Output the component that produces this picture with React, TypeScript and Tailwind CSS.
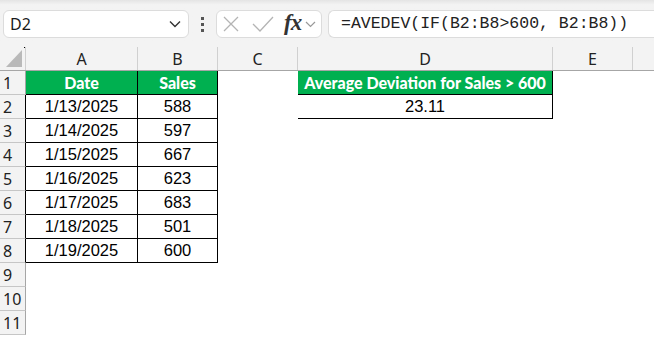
import React from 'react';

type Cell = { text?: string; kind?: 'head' | 'data' | 'none' };

const COLS = [
  { key: 'A', w: 'w-[112px]' },
  { key: 'B', w: 'w-[80px]' },
  { key: 'C', w: 'w-[80px]' },
  { key: 'D', w: 'w-[255px]' },
  { key: 'E', w: 'w-[80px]' },
];

const dates = ['1/13/2025', '1/14/2025', '1/15/2025', '1/16/2025', '1/17/2025', '1/18/2025', '1/19/2025'];
const sales = ['588', '597', '667', '623', '683', '501', '600'];

const rows: Cell[][] = Array.from({ length: 11 }, (_, i) => {
  const r = i + 1;
  const none: Cell = { kind: 'none' };
  if (r === 1)
    return [
      { text: 'Date', kind: 'head' },
      { text: 'Sales', kind: 'head' },
      none,
      { text: 'Average Deviation for Sales > 600', kind: 'head' },
      none,
    ];
  if (r <= 8)
    return [
      { text: dates[r - 2], kind: 'data' },
      { text: sales[r - 2], kind: 'data' },
      none,
      r === 2 ? { text: '23.11', kind: 'data' } : none,
      none,
    ];
  return [none, none, none, none, none];
});

const App: React.FC = () => {
  return (
    <div className="w-[654px] h-[337px] overflow-hidden bg-white font-['Liberation_Sans',sans-serif]">
      {/* formula bar */}
      <div className="h-[47px] bg-[#f3f3f3] bg-gradient-to-b from-[#e4e4e4] via-[#f3f3f3] via-[10%] to-[#f3f3f3] flex items-start pt-[10px] pl-[3px]">
        <div className="w-[186px] h-[28px] bg-white border border-[#dcdcdc] rounded-[6px] flex items-center justify-between pl-[6px] pr-[7px]">
          <span className="text-[16px] text-[#1a1a1a] font-['Noto_Sans',sans-serif]">D2</span>
          <svg width="12" height="8" viewBox="0 0 12 8" fill="none" stroke="#333" strokeWidth="1.4">
            <path d="M1 1.5 L6 6.5 L11 1.5" />
          </svg>
        </div>
        <div className="w-[27px] h-[28px] flex flex-col items-center justify-center gap-[3px]">
          <span className="w-[3px] h-[3px] bg-[#555]" />
          <span className="w-[3px] h-[3px] bg-[#555]" />
          <span className="w-[3px] h-[3px] bg-[#555]" />
        </div>
        <div className="w-[106px] h-[28px] bg-white border border-[#dcdcdc] rounded-[6px] flex items-center pl-[6px]">
          <svg width="16" height="16" viewBox="0 0 16 16" stroke="#b4b4b4" strokeWidth="1.3" fill="none">
            <path d="M1 1 L15 15 M15 1 L1 15" />
          </svg>
          <svg className="ml-[13px]" width="22" height="16" viewBox="0 0 22 16" stroke="#b4b4b4" strokeWidth="1.3" fill="none">
            <path d="M1 8 L8 15 L21 1" />
          </svg>
          <span className="ml-[10px] text-[23px] italic font-bold leading-none text-[#333] font-['Liberation_Serif',serif] tracking-[-1px] -mt-[3px]">
            fx
          </span>
          <svg className="ml-[4px]" width="11" height="7" viewBox="0 0 11 7" fill="none" stroke="#999" strokeWidth="1.2">
            <path d="M1 1 L5.5 5.5 L10 1" />
          </svg>
        </div>
        <div className="ml-[6px] flex-1 h-[28px] bg-white border border-[#dcdcdc] rounded-l-[6px] border-r-0 flex items-center pl-[12px]">
          <span className="text-[16.5px] text-[#222] font-['Liberation_Mono',monospace] whitespace-nowrap">
            =AVEDEV(IF(B2:B8&gt;600, B2:B8))
          </span>
        </div>
      </div>

      {/* column headers */}
      <div className="flex h-[24px] bg-[#f3f3f3] border-b border-[#a6a6a6]">
        <div className="w-[26px] h-full relative border-r border-[#d0d0d0]">
          <div className="absolute right-0 top-0 w-px h-px bg-black" />
          <svg className="absolute left-[6px] top-[3px]" width="16" height="17" viewBox="0 0 16 17">
            <path d="M16 0 L16 17 L0 17 Z" fill="#b9b9b9" />
          </svg>
        </div>
        {COLS.map((c) => (
          <div
            key={c.key}
            className={`${c.w} h-full border-r border-[#d0d0d0] flex items-center justify-center text-[16px] text-[#222] font-['Noto_Sans',sans-serif]`}
          >
            {c.key}
          </div>
        ))}
      </div>

      {/* grid */}
      {rows.map((cells, i) => {
        const r = i + 1;
        const inTable = r <= 8;
        return (
          <div key={r} className="flex h-[24px]">
            <div
              className={`w-[26px] h-full bg-[#f3f3f3] border-b border-[#c6c6c6] border-r ${
                inTable && r > 1 ? 'border-r-black' : 'border-r-[#a6a6a6]'
              } flex items-center pl-[3px] text-[16px] text-[#222] font-['Noto_Sans',sans-serif]`}
            >
              {r}
            </div>
            {cells.map((cell, j) => {
              const col = COLS[j];
              const isTableCol = (j <= 1 && inTable) || (j === 3 && r <= 2);
              const rightBlack = isTableCol || (j === 2 && r <= 2);
              const cls = [
                col.w,
                'h-full flex items-center justify-center whitespace-nowrap',
                isTableCol ? 'border-b border-black' : 'border-b border-transparent',
                rightBlack ? 'border-r border-black' : 'border-r border-transparent',
                cell.kind === 'head'
                  ? "bg-[#00b050] text-white font-black text-[16px] font-['Lato',sans-serif]"
                  : 'text-black text-[16.5px]',
              ].join(' ');
              return (
                <div key={col.key} className={cls}>
                  {cell.text}
                </div>
              );
            })}
          </div>
        );
      })}
    </div>
  );
};

export default App;
